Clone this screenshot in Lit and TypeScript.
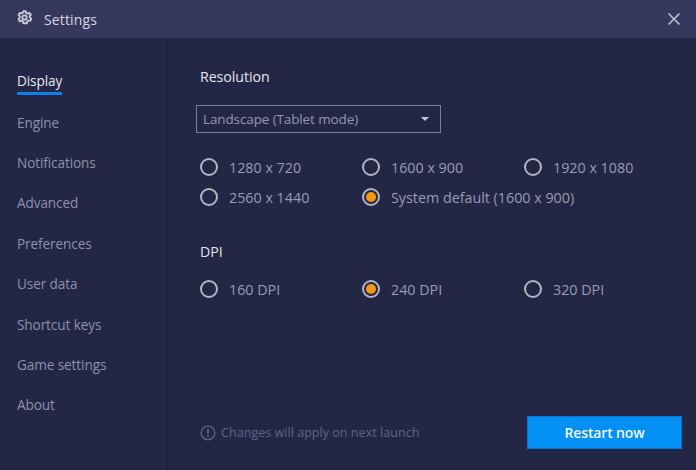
import { LitElement, html, css, svg } from "lit";
import { customElement } from "lit/decorators.js";

const NAV = ["Display","Engine","Notifications","Advanced","Preferences","User data","Shortcut keys","Game settings","About"];
const RES: [string, boolean][] = [["1280 x 720",false],["1600 x 900",false],["1920 x 1080",false],["2560 x 1440",false],["System default (1600 x 900)",true]];
const DPI: [string, boolean][] = [["160 DPI",false],["240 DPI",true],["320 DPI",false]];

@customElement("app-root")
export class AppRoot extends LitElement {
  static styles = css`
    :host { display:block; width:696px; height:470px; overflow:hidden; background:#232644; font-family:"Open Sans","Noto Sans",sans-serif; font-size:14px; }
    .title { height:38px; background:#35375d; display:flex; align-items:center; padding:0 15px 0 17px; box-sizing:border-box; color:#d5d6e2; }
    .title svg.gear { width:15px; height:15px; margin-right:12px; margin-top:-3px; }
    .title span { flex:1; font-size:14px; letter-spacing:.15px; margin-top:1px; }
    .close { width:14px; height:14px; margin-top:-1px; }
    .main { display:flex; height:432px; }
    .side { box-sizing:border-box; border-right:1px solid #1d2039; width:168px; padding:33.45px 0 0 17px; display:flex; flex-direction:column; }
    .nav { height:40.35px; flex:none; display:flex; align-items:flex-start; color:#8f90ad; font-size:13.6px; letter-spacing:-.1px; line-height:22px; }
    .nav.on span { color:#e8e8f0; border-bottom:3px solid #0a84e6; border-radius:1px; margin-top:-1px; }
    .content { flex:1; display:flex; flex-direction:column; padding:29px 0 0 28px; min-width:0; }
    h2 { margin:0; font-size:14.2px; font-weight:400; color:#e4e4ec; line-height:20px; padding-left:4px; letter-spacing:-.05px; }
    .select { width:245px; height:28px; box-sizing:border-box; border:1px solid #7b7c9e; margin-top:18px; display:flex; align-items:center; justify-content:space-between; padding:0 11px 0 6px; color:#9697b2; font-size:13.5px; letter-spacing:-.12px; }
    .caret { width:0; height:0; border-left:4px solid transparent; border-right:4px solid transparent; border-top:4px solid #c6c6d6; }
    .grid { display:grid; grid-template-columns:162px 162px 1fr; row-gap:10px; margin-top:24px; padding-left:4px; }
    .radio { display:flex; align-items:center; height:20px; color:#9a9bb5; font-size:14.3px; white-space:nowrap; }
    .dot { width:18px; height:18px; box-sizing:border-box; border:2px solid #b4b4c2; border-radius:50%; margin-right:11px; display:flex; align-items:center; justify-content:center; flex:none; }
    .dot i { width:10px; height:10px; border-radius:50%; background:#f29a0e; display:block; }
    .dpi { margin-top:35px; }
    .dpi-grid { margin-top:17px; }
    .foot { margin-top:auto; display:flex; align-items:center; justify-content:space-between; padding:0 14px 21px 4px; }
    .note { display:flex; align-items:center; color:#62648a; font-size:12.6px; gap:5px; }
    .note svg { width:16px; height:16px; }
    .btn { width:155px; height:33px; background:#0290f5; color:#f2f8ff; border:1px solid #0a78c8; box-sizing:border-box; display:flex; align-items:center; justify-content:center; font-size:14px; font-weight:600; letter-spacing:-.15px; }
  `;
  radios(items: [string, boolean][]) {
    return items.map(([t, on]) => html`<div class="radio"><div class="dot">${on ? html`<i></i>` : ""}</div>${t}</div>`);
  }
  render() {
    return html`
      <div class="title">
        <svg class="gear" viewBox="0 0 24 24" fill="none" stroke="#c9cad8" stroke-width="3" stroke-linejoin="round">
          ${svg`<path d="M10 2h4l.7 3 2.3 1 2.7-1.5 2.6 3-2 2.300.3 2.200 2.400 1.800-1.800 3.500-3-.6-1.800 1.500-.4 3H10l-.7-3-2-1.200-2.900 1-2-3.300 2-2.200v-2.400l-2-2.200 2-3.300 2.900 1 2-1.200z"/><circle cx="12" cy="12" r="3.500"/>`}
        </svg>
        <span>Settings</span>
        <svg class="close" viewBox="0 0 14 14" stroke="#b9bacb" stroke-width="1.700">${svg`<path d="M1.500 1.500l11 11M12.500 1.500l-11 11"/>`}</svg>
      </div>
      <div class="main">
        <div class="side">
          ${NAV.map((n, i) => html`<div class="nav ${i === 0 ? "on" : ""}"><span>${n}</span></div>`)}
        </div>
        <div class="content">
          <h2>Resolution</h2>
          <div class="select"><span>Landscape (Tablet mode)</span><div class="caret"></div></div>
          <div class="grid">${this.radios(RES)}</div>
          <h2 class="dpi">DPI</h2>
          <div class="grid dpi-grid">${this.radios(DPI)}</div>
          <div class="foot">
            <div class="note">
              <svg viewBox="0 0 16 16" fill="none" stroke="#62648a" stroke-width="1.300">${svg`<circle cx="8" cy="8" r="6.800"/><path d="M8 4v5M8 10.500v1.500" stroke-width="1.700"/>`}</svg>
              Changes will apply on next launch
            </div>
            <div class="btn">Restart now</div>
          </div>
        </div>
      </div>
    `;
  }
}
